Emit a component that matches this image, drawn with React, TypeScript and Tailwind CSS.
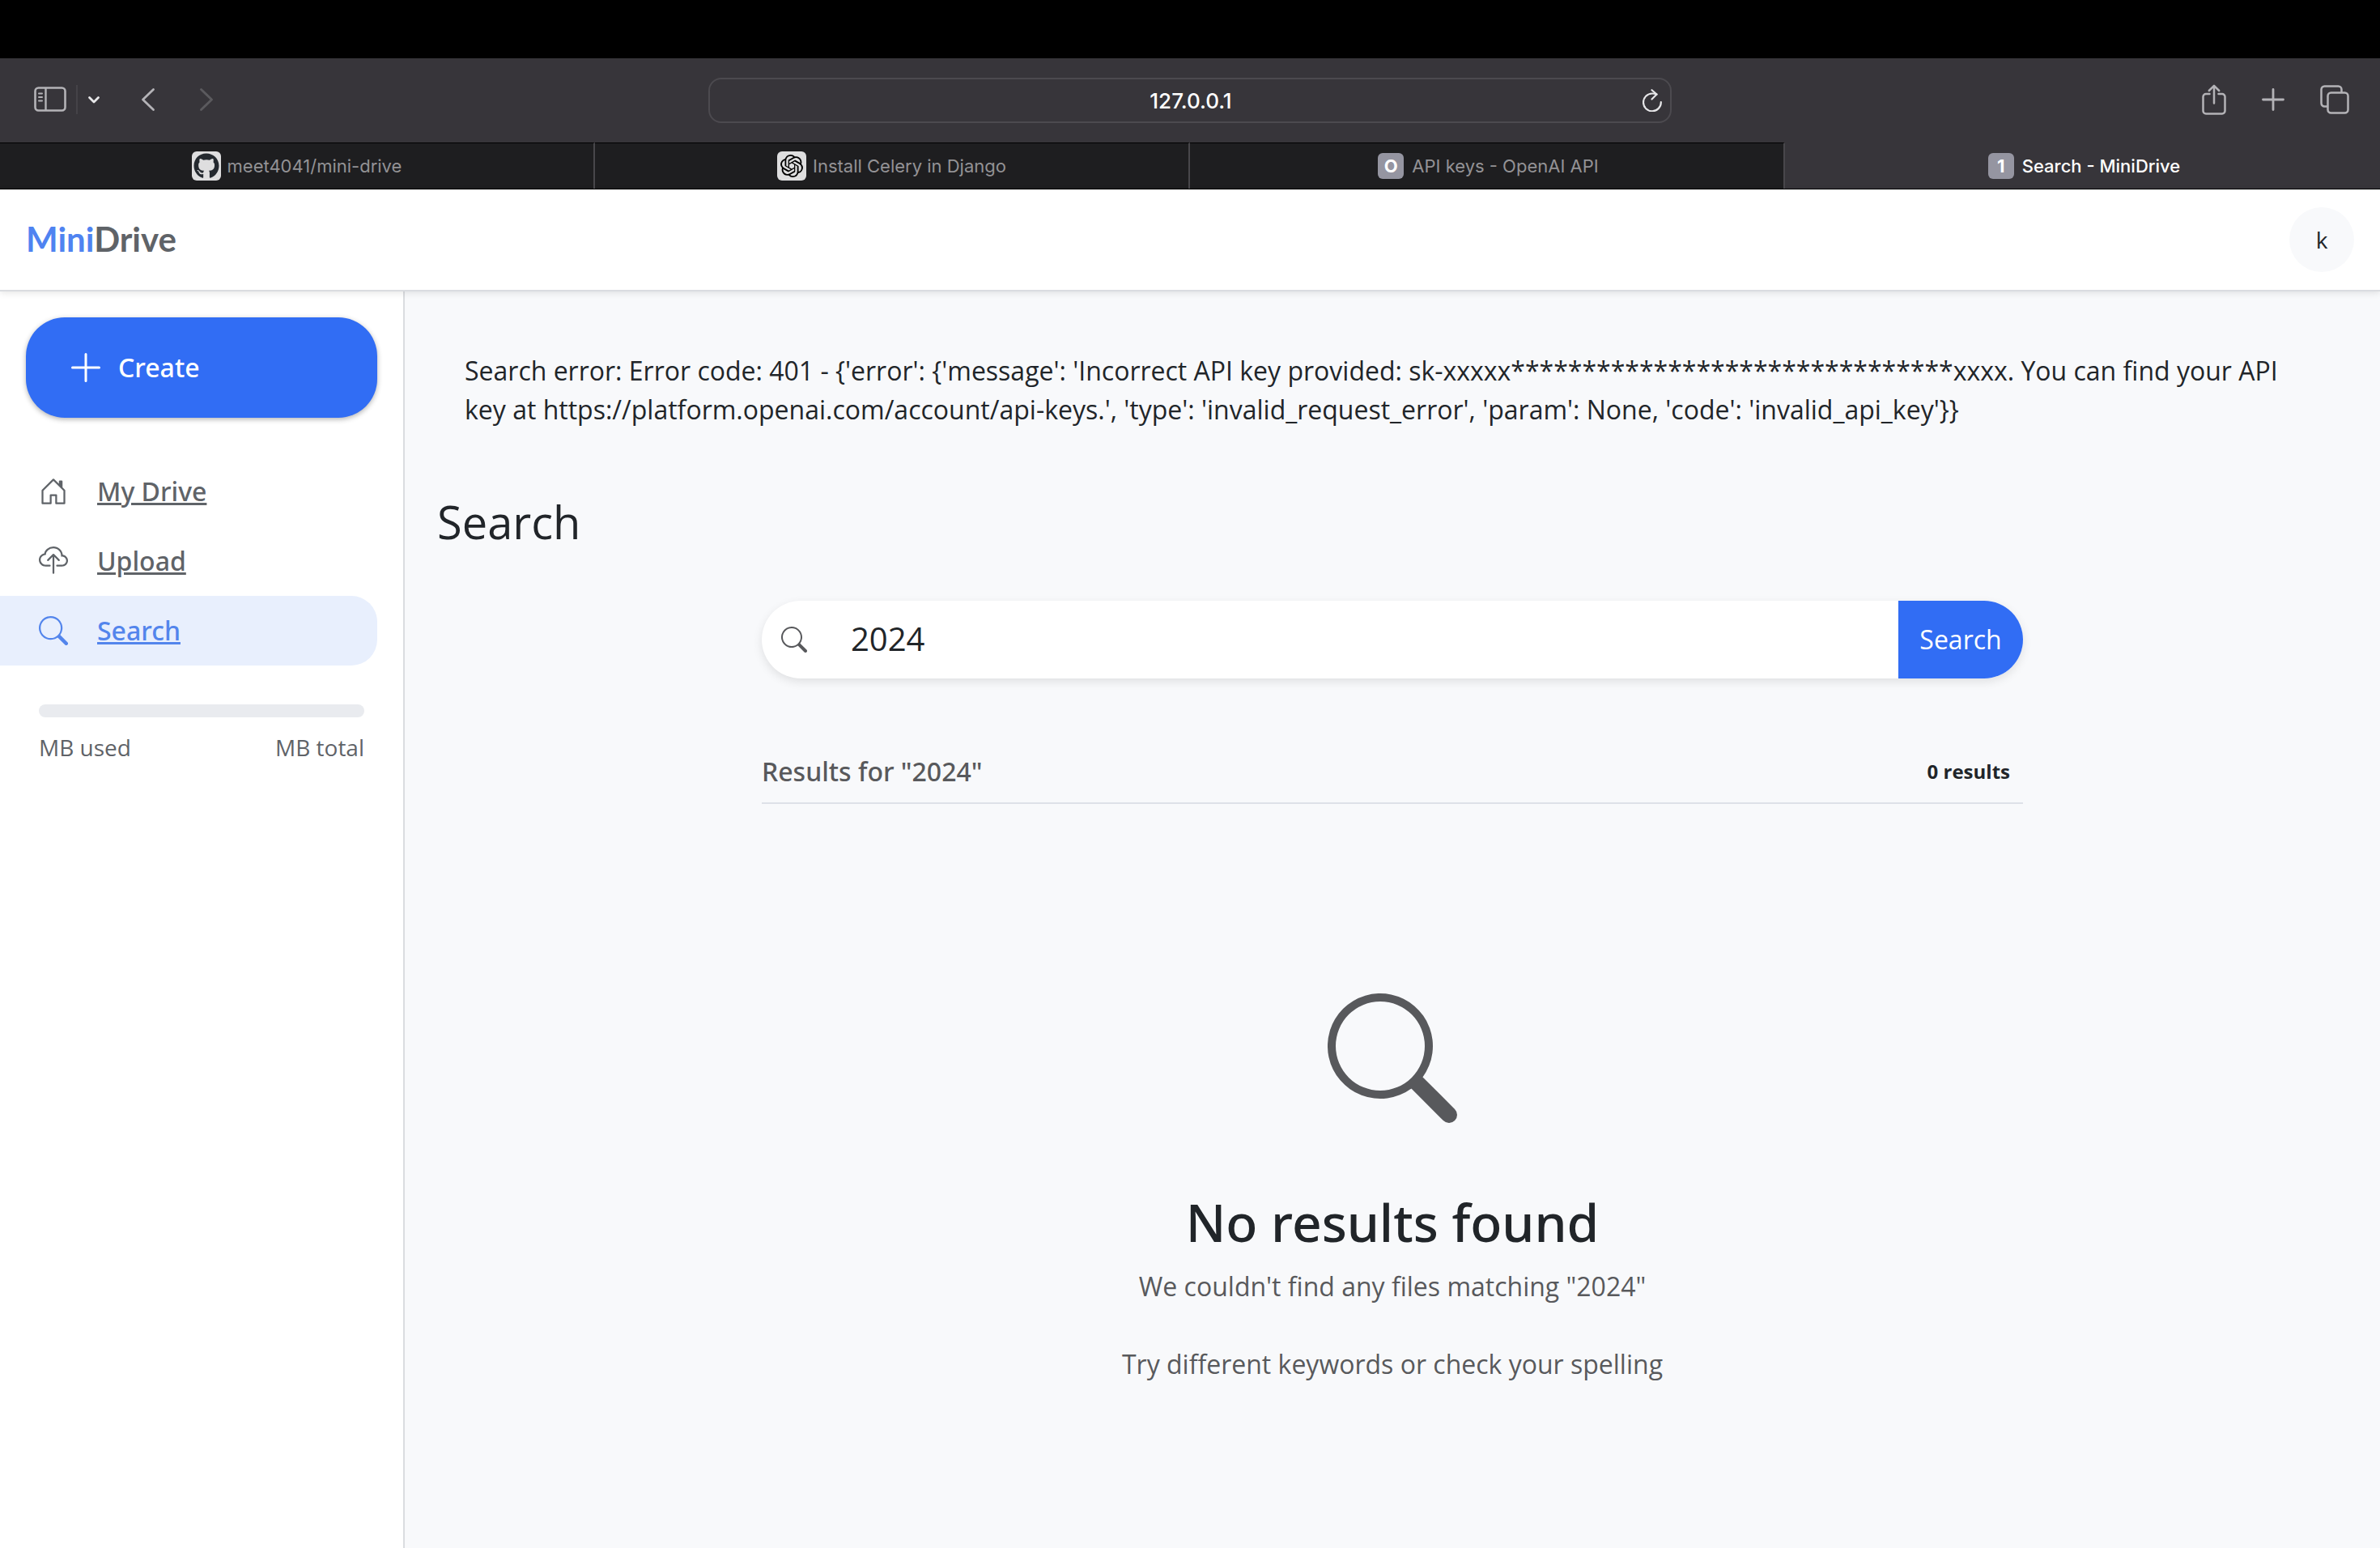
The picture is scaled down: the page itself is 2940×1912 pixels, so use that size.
import React from "react";
import { BsCloudUpload, BsHouseDoor, BsPlusLg, BsSearch } from "react-icons/bs";
import { FaGithub } from "react-icons/fa";
import { SiOpenai } from "react-icons/si";

type IconProps = { className?: string };

function SidebarIcon({ className }: IconProps) {
  return (
    <svg className={className} viewBox="0 0 40 32" fill="none" stroke="currentColor" aria-hidden="true">
      <rect x="1.5" y="1.5" width="37" height="28" rx="4" strokeWidth="2.6" />
      <path d="M14.5 2v27" strokeWidth="2.4" />
      <path d="M6 8.500h4M6 13h4M6 17.500h4" strokeWidth="2" strokeLinecap="round" />
    </svg>
  );
}

function ChevronDown({ className }: IconProps) {
  return (
    <svg className={className} viewBox="0 0 16 12" fill="none" stroke="currentColor" strokeWidth="2.8" strokeLinecap="round" strokeLinejoin="round" aria-hidden="true">
      <path d="M2.500 3.500l5.500 5.500 5.500-5.500" />
    </svg>
  );
}

function ChevronLeft({ className }: IconProps) {
  return (
    <svg className={className} viewBox="0 0 20 32" fill="none" stroke="currentColor" strokeWidth="2.800" strokeLinecap="round" strokeLinejoin="round" aria-hidden="true">
      <path d="M16.500 3.500L3.500 16l13 12.500" />
    </svg>
  );
}

function ChevronRight({ className }: IconProps) {
  return (
    <svg className={className} viewBox="0 0 20 32" fill="none" stroke="currentColor" strokeWidth="2.800" strokeLinecap="round" strokeLinejoin="round" aria-hidden="true">
      <path d="M3.500 3.500L16.500 16 3.500 28.500" />
    </svg>
  );
}

function ReloadIcon({ className }: IconProps) {
  return (
    <svg className={className} viewBox="0 0 24 28" fill="none" stroke="currentColor" strokeWidth="2.200" strokeLinecap="round" strokeLinejoin="round" aria-hidden="true">
      <path d="M22.800 16A10.900 10.900 0 1 1 12 5.500Q15 5.500 17.500 6.500" />
      <path d="M11.500 1.200L17.500 6.500 11.500 12.500" />
    </svg>
  );
}

function ShareIcon({ className }: IconProps) {
  return (
    <svg className={className} viewBox="0 0 30 38" fill="none" stroke="currentColor" strokeWidth="2.500" strokeLinecap="round" strokeLinejoin="round" aria-hidden="true">
      <path d="M9.500 12H5a3.500 3.500 0 0 0-3.500 3.500v17.500A3.500 3.500 0 0 0 5 36.500h20a3.500 3.500 0 0 0 3.500-3.500V15.500A3.500 3.500 0 0 0 25 12h-4.500" />
      <path d="M15 23.500V2M8.800 8L15 1.800 21.200 8" />
    </svg>
  );
}

function PlusIcon({ className }: IconProps) {
  return (
    <svg className={className} viewBox="0 0 28 28" fill="none" stroke="currentColor" strokeWidth="2.800" strokeLinecap="round" aria-hidden="true">
      <path d="M14 1.500v25M1.500 14h25" />
    </svg>
  );
}

function TabsIcon({ className }: IconProps) {
  return (
    <svg className={className} viewBox="0 0 36 36" fill="none" stroke="currentColor" strokeWidth="2.500" strokeLinejoin="round" aria-hidden="true">
      <rect x="9.500" y="9.500" width="25" height="25" rx="4" />
      <path d="M9.500 26.500H5.500a4 4 0 0 1-4-4v-17a4 4 0 0 1 4-4h17a4 4 0 0 1 4 4v4" />
    </svg>
  );
}

function BrowserToolbar() {
  return (
    <div className="grid h-[104px] grid-cols-[1fr_1190px_1fr] items-center bg-[#37353a] text-[#b4b3b7]">
      <div className="flex items-center pb-0.5 pl-[42px]">
        <button aria-label="Show sidebar"><SidebarIcon className="h-8 w-10" /></button>
        <span className="ml-3 h-9 w-0.5 bg-[#454348]" />
        <button aria-label="Tab groups" className="ml-3 text-[#e8e8ea]"><ChevronDown className="h-3 w-4" /></button>
        <button aria-label="Back" className="ml-[49px]"><ChevronLeft className="h-8 w-5" /></button>
        <button aria-label="Forward" className="ml-[52px] text-[#5b5a5e]"><ChevronRight className="h-8 w-5" /></button>
      </div>
      <div className="relative">
        <input
          aria-label="Address"
          defaultValue="127.0.0.1"
          className="h-14 w-full rounded-2xl border-2 border-[#4c4a4f] bg-transparent pl-0.5 text-center text-[26px] font-medium text-white outline-none"
        />
        <button aria-label="Reload" className="absolute top-[14px] right-3 text-[#e6e6e8]"><ReloadIcon className="h-7 w-6" /></button>
      </div>
      <div className="flex items-center justify-end gap-11 pr-[38px] pb-0.5">
        <button aria-label="Share"><ShareIcon className="h-[38px] w-[30px]" /></button>
        <button aria-label="New tab"><PlusIcon className="size-7" /></button>
        <button aria-label="Tab overview"><TabsIcon className="size-9" /></button>
      </div>
    </div>
  );
}

function LetterBadge({ children }: { children: React.ReactNode }) {
  return (
    <span className="flex size-8 items-center justify-center rounded-md bg-[#9595a1] text-[22px] font-bold text-white">
      {children}
    </span>
  );
}

function BrowserTabs() {
  const idle = "flex items-center justify-center border-t border-r-2 border-t-black border-r-[#48474b] bg-[#1e1e20]";
  return (
    <div role="tablist" aria-label="Open tabs" className="grid h-[58px] grid-cols-4 border-b border-black bg-[#37353a] text-[22px] text-[#939295]">
      <button role="tab" aria-selected="false" className={idle + " gap-2"}>
        <span className="flex size-9 items-center justify-center rounded-md bg-[#dededf] text-[#24292f]">
          <FaGithub className="size-8" />
        </span>
        meet4041/mini-drive
      </button>
      <button role="tab" aria-selected="false" className={idle + " gap-2"}>
        <span className="flex size-9 items-center justify-center rounded-md bg-[#dededf] text-black">
          <SiOpenai className="size-7" />
        </span>
        Install Celery in Django
      </button>
      <button role="tab" aria-selected="false" className={idle + " gap-[10px] pl-1"}>
        <LetterBadge>O</LetterBadge>
        API keys - OpenAI API
      </button>
      <button role="tab" aria-selected="true" className="flex items-center justify-center gap-[10px] pt-px pl-1 font-medium text-white">
        <LetterBadge>1</LetterBadge>
        Search - MiniDrive
      </button>
    </div>
  );
}

const navItems = [
  { label: "My Drive", Icon: BsHouseDoor, active: false },
  { label: "Upload", Icon: BsCloudUpload, active: false },
  { label: "Search", Icon: BsSearch, active: true },
];

function Sidebar() {
  return (
    <aside className="w-[500px] shrink-0 border-r-2 border-[#dadce0] bg-white pt-8 text-[#5f6368]">
      <button className="ml-8 flex h-[124px] w-[434px] items-center gap-4 rounded-[48px] bg-[#316df4] pl-[50px] font-['Noto_Sans',sans-serif] text-[32px] font-medium text-white shadow-[0_2px_6px_rgba(0,0,0,0.3)]">
        <BsPlusLg className="size-12" />
        Create
      </button>
      <nav className="mt-12 mr-8 font-['Noto_Sans',sans-serif]">
        {navItems.map(({ label, Icon, active }) => (
          <div
            key={label}
            className={
              active
                ? "flex h-[86px] items-center gap-9 rounded-r-[32px] bg-[#e8effd] pl-12 text-[#5385ec]"
                : "flex h-[86px] items-center gap-9 pl-12"
            }
          >
            <Icon className="size-9" />
            <a href="#" className="text-[32px] font-medium underline">{label}</a>
          </div>
        ))}
      </nav>
      <div className="mt-12 px-12">
        <div role="progressbar" aria-label="Storage used" className="h-4 rounded-full bg-[#e9ebef]" />
        <div className="mt-4 flex justify-between text-[28px] leading-[42px]">
          <span>MB used</span>
          <span>MB total</span>
        </div>
      </div>
    </aside>
  );
}

const errorMessage =
  "Search error: Error code: 401 - {'error': {'message': 'Incorrect API key provided: sk-xxxxx*******************************xxxx. You can find your API key at https://platform.openai.com/account/api-keys.', 'type': 'invalid_request_error', 'param': None, 'code': 'invalid_api_key'}}";

function SearchPage() {
  return (
    <main className="min-w-0 flex-1 bg-[#f8f9fb] px-10 pt-[74px] text-[#212529]">
      <p className="px-[34px] text-[32px] leading-[48px]">{errorMessage}</p>
      <h1 className="mt-20 text-[56px] leading-[68px]">Search</h1>
      <div className="mx-auto mt-16 w-full max-w-[1558px]">
        <form className="flex h-24 overflow-hidden rounded-full bg-white shadow-[0_4px_12px_rgba(0,0,0,0.1)]" onSubmit={(e) => e.preventDefault()}>
          <label htmlFor="query" className="flex items-center pl-6 text-[#58595c]">
            <BsSearch className="size-8" />
          </label>
          <input id="query" aria-label="Search files" defaultValue="2024" className="min-w-0 flex-1 pb-0.5 pl-[54px] text-[40px] outline-none" />
          <button className="w-[154px] bg-[#316df4] text-[32px] text-white">Search</button>
        </form>
        <div className="mt-[92px] flex items-center justify-between border-b-2 border-[#dee1e8] pb-[15px]">
          <h2 className="font-['Noto_Sans',sans-serif] text-[32px] leading-[46px] font-medium text-[#58595c]">Results for "2024"</h2>
          <span className="pr-4 text-[24px] font-bold">0 results</span>
        </div>
        <div className="flex flex-col items-center pt-[234px] text-[32px] leading-[48px] text-[#58595c]">
          <BsSearch className="size-40" />
          <h3 className="mt-[84px] font-['Noto_Sans',sans-serif] text-[64px] leading-[78px] font-medium text-[#212529]">No results found</h3>
          <p className="mt-4">We couldn't find any files matching "2024"</p>
          <p className="mt-12">Try different keywords or check your spelling</p>
        </div>
      </div>
    </main>
  );
}

export default function App() {
  return (
    <div className="flex min-h-screen flex-col bg-white font-['Open_Sans',sans-serif]">
      <div className="font-['Inter',sans-serif]">
        <div className="h-[72px] bg-black" />
        <BrowserToolbar />
        <BrowserTabs />
      </div>
      <header className="relative z-10 flex h-[126px] items-center justify-between border-b-2 border-[#dadce0] bg-white px-8 shadow-[0_2px_8px_rgba(0,0,0,0.1)]">
        <a href="#" className="pb-0.5 font-['Lato',sans-serif] text-[42px] font-bold text-[#5f6368]">
          <span className="text-[#4f83f1]">Mini</span>Drive
        </a>
        <button aria-label="Account" className="flex size-20 items-center justify-center rounded-full bg-[#f8f9fb] text-[28px] text-[#212529]">k</button>
      </header>
      <div className="flex flex-1">
        <Sidebar />
        <SearchPage />
      </div>
    </div>
  );
}
